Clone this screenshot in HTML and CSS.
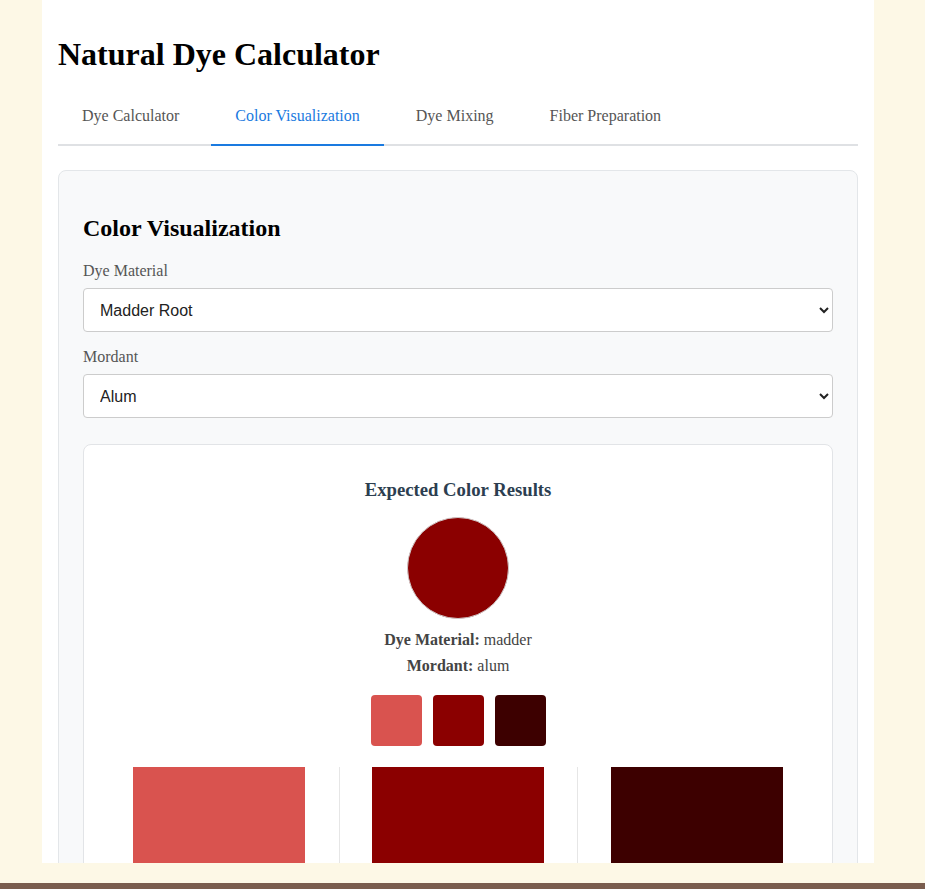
FILE: index.html
```html
<!DOCTYPE html>
<html lang="en">
<head>
<meta charset="utf-8">
<title>Natural Dye Calculator</title>
<link rel="stylesheet" href="styles.css">
</head>
<body>
<div class="viewport">
  <div class="card">
    <h1>Natural Dye Calculator</h1>
    <nav class="tabs">
      <button class="tab">Dye Calculator</button>
      <button class="tab active">Color Visualization</button>
      <button class="tab">Dye Mixing</button>
      <button class="tab">Fiber Preparation</button>
    </nav>
    <section class="panel">
      <h2>Color Visualization</h2>
      <div class="form-group">
        <label for="dye">Dye Material</label>
        <select id="dye" class="select">
          <option>Madder Root</option>
        </select>
      </div>
      <div class="form-group last">
        <label for="mordant">Mordant</label>
        <select id="mordant" class="select">
          <option>Alum</option>
        </select>
      </div>
      <div class="results">
        <h3>Expected Color Results</h3>
        <div class="circle"></div>
        <p class="meta"><strong>Dye Material:</strong> madder</p>
        <p class="meta"><strong>Mordant:</strong> alum</p>
        <div class="mini-row">
          <div class="mini light"></div>
          <div class="mini mid"></div>
          <div class="mini dark"></div>
        </div>
        <div class="columns">
          <div class="col"><div class="big light"></div></div>
          <div class="col"><div class="big mid"></div></div>
          <div class="col"><div class="big dark"></div></div>
        </div>
      </div>
    </section>
  </div>
</div>
<footer class="footer"></footer>
</body>
</html>
```

FILE: styles.css
```css
html, body {
  margin: 0;
  height: 100%;
}

body {
  background: #fdf8e6;
  font-family: "Liberation Serif", "Times New Roman", serif;
  display: flex;
  flex-direction: column;
  overflow: hidden;
}

.viewport {
  flex: 1;
  min-height: 0;
  overflow: hidden;
  margin-bottom: 20px;
  padding-right: 9px;
}

.card {
  width: 800px;
  margin: 0 auto;
  background: #ffffff;
  padding: 15px 16px 40px;
  min-height: 100%;
}

h1 {
  font-size: 32px;
  font-weight: bold;
  margin: 21px 0 15px;
  color: #000;
}

.tabs {
  display: flex;
  gap: 8px;
  border-bottom: 2px solid #dfe1e4;
}

.tab {
  font-family: "Liberation Serif", "Times New Roman", serif;
  font-size: 16px;
  color: #555;
  background: none;
  border: none;
  border-bottom: 2px solid transparent;
  margin-bottom: -2px;
  padding: 19px 24px;
  cursor: pointer;
}

.tab.active {
  color: #1a7ae0;
  border-bottom-color: #1a7ae0;
}

.panel {
  margin-top: 24px;
  background: #f8f9fa;
  border: 1px solid #e3e6e9;
  border-radius: 8px;
  padding: 24px;
}

h2 {
  font-size: 24px;
  margin: 20px 0;
  color: #000;
}

.form-group {
  margin-bottom: 16px;
}

.form-group.last {
  margin-bottom: 0;
}

label {
  display: block;
  font-size: 16px;
  color: #555;
  margin-bottom: 8px;
}

.select {
  width: 100%;
  height: 44px;
  padding: 0 12px;
  font-family: "Liberation Sans", Arial, sans-serif;
  font-size: 16px;
  color: #222;
  background: #fff;
  border: 1px solid #ccc;
  border-radius: 4px;
}

.results {
  margin-top: 26px;
  background: #fff;
  border: 1px solid #e2e4e7;
  border-radius: 8px;
  padding: 16px;
  text-align: center;
}

h3 {
  font-size: 18.72px;
  color: #2c3e50;
  margin: 18px 0 16px;
}

.circle {
  width: 100px;
  height: 100px;
  border-radius: 50%;
  border: 1px solid #d0c8c8;
  background: #8b0000;
  margin: 0 auto 8px;
}

.meta {
  margin: 0;
  line-height: 1.6;
  font-size: 16px;
  color: #444;
}

.meta strong {
  color: #444;
}

.mini-row {
  display: flex;
  justify-content: center;
  gap: 11px;
  margin: 17px 0 21px;
}

.mini {
  width: 51px;
  height: 51px;
  border-radius: 4px;
}

.light { background: #d9534f; }
.mid { background: #8b0000; }
.dark { background: #3d0000; }

.columns {
  display: grid;
  grid-template-columns: repeat(3, 1fr);
}

.col {
  border-left: 1px solid #e6e6e6;
}

.col:first-child {
  border-left: none;
}

.big {
  width: 172px;
  height: 160px;
  margin: 0 auto;
}

.footer {
  height: 6px;
  background: #7a5d4e;
  flex: none;
}
```
